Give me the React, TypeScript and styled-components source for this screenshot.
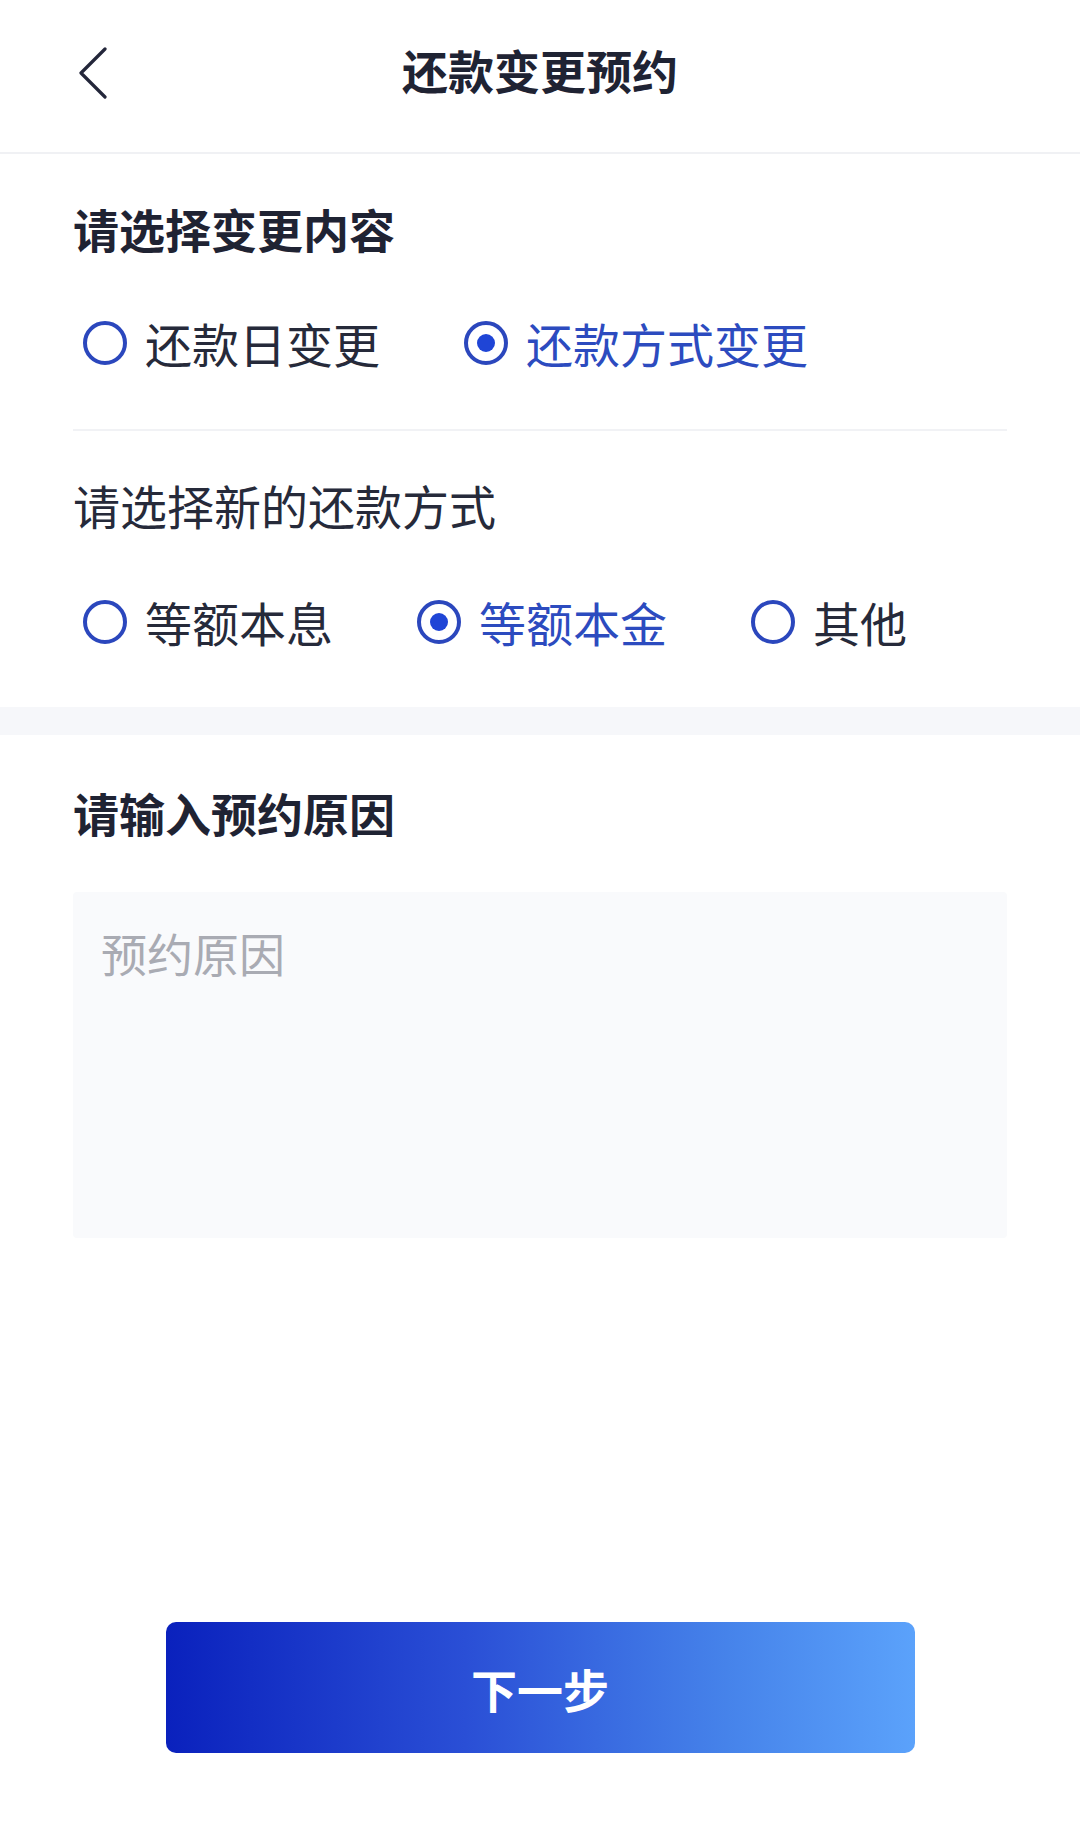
import { useState } from 'react'
import styled, { createGlobalStyle } from 'styled-components'

const GlobalStyle = createGlobalStyle`
  html, body {
    margin: 0;
    padding: 0;
    background: #ffffff;
  }
  body {
    font-family: "Noto Sans CJK SC", "Noto Sans", sans-serif;
    color: #262a3a;
  }
`

type Option = { value: string; label: string }

const changeOptions: Option[] = [
  { value: 'date', label: '还款日变更' },
  { value: 'method', label: '还款方式变更' },
]

const methodOptions: Option[] = [
  { value: 'equal-installment', label: '等额本息' },
  { value: 'equal-principal', label: '等额本金' },
  { value: 'other', label: '其他' },
]

const RadioGroup = ({
  options,
  value,
  onChange,
  top,
}: {
  options: Option[]
  value: string
  onChange: (v: string) => void
  top: number
}) => (
  <RadioRow $top={top}>
    {options.map((o) => (
      <RadioItem key={o.value} onClick={() => onChange(o.value)}>
        <RadioCircle $checked={o.value === value} />
        <RadioLabel $checked={o.value === value}>{o.label}</RadioLabel>
      </RadioItem>
    ))}
  </RadioRow>
)

export default function App() {
  const [change, setChange] = useState('method')
  const [method, setMethod] = useState('equal-principal')

  return (
    <Page>
      <GlobalStyle />
      <Header>
        <BackButton aria-label="返回">
          <svg width="30" height="52" viewBox="0 0 30 52" fill="none">
            <path
              d="M27 2 L3 26 L27 50"
              stroke="#23263a"
              strokeWidth="3.2"
              strokeLinecap="round"
              strokeLinejoin="round"
            />
          </svg>
        </BackButton>
        <HeaderTitle>还款变更预约</HeaderTitle>
      </Header>

      <Section>
        <SectionTitle>请选择变更内容</SectionTitle>
        <RadioGroup options={changeOptions} value={change} onChange={setChange} top={55} />
        <Divider />
        <SubTitle>请选择新的还款方式</SubTitle>
        <RadioGroup options={methodOptions} value={method} onChange={setMethod} top={57} />
      </Section>

      <Band />

      <Section>
        <ReasonTitle>请输入预约原因</ReasonTitle>
        <ReasonInput placeholder="预约原因" />
      </Section>

      <Footer>
        <NextButton>下一步</NextButton>
      </Footer>
    </Page>
  )
}

const Page = styled.div`
  min-height: 100vh;
  display: flex;
  flex-direction: column;
`
const Header = styled.header`
  position: relative;
  box-sizing: border-box;
  height: 154px;
  padding-bottom: 14px;
  display: flex;
  align-items: center;
  justify-content: center;
  border-bottom: 2px solid #f0f1f4;
`
const BackButton = styled.button`
  position: absolute;
  left: 78px;
  top: 47px;
  padding: 0;
  border: none;
  background: none;
  display: flex;
`
const HeaderTitle = styled.h1`
  margin: 0;
  font-size: 46px;
  line-height: 60px;
  font-weight: 700;
  color: #1f2333;
`
const Section = styled.section`
  display: flex;
  flex-direction: column;
  padding: 0 73px;
`
const SectionTitle = styled.h2`
  margin: 44px 0 0;
  font-size: 46px;
  line-height: 60px;
  font-weight: 700;
  color: #1f2333;
`
const ReasonTitle = styled(SectionTitle)`
  margin-top: 47px;
`
const SubTitle = styled.div`
  margin-top: 44px;
  font-size: 47px;
  line-height: 60px;
  color: #262a3a;
`
const RadioRow = styled.div<{ $top: number }>`
  display: flex;
  align-items: center;
  gap: 84px;
  margin-top: ${({ $top }) => $top}px;
  padding-left: 10px;
  height: 60px;
`
const RadioItem = styled.label`
  display: flex;
  align-items: center;
  gap: 18px;
  cursor: pointer;
`
const RadioCircle = styled.span<{ $checked: boolean }>`
  box-sizing: border-box;
  width: 44px;
  height: 44px;
  border-radius: 50%;
  border: 4px solid #2b47bd;
  display: flex;
  align-items: center;
  justify-content: center;

  &::after {
    content: '';
    display: ${({ $checked }) => ($checked ? 'block' : 'none')};
    width: 18px;
    height: 18px;
    border-radius: 50%;
    background: #1f45d6;
  }
`
const RadioLabel = styled.span<{ $checked: boolean }>`
  font-size: 47px;
  line-height: 60px;
  color: ${({ $checked }) => ($checked ? '#2c4bbf' : '#262a3a')};
`
const Divider = styled.div`
  margin-top: 56px;
  height: 2px;
  background: #f1f2f5;
`
const Band = styled.div`
  margin-top: 55px;
  height: 28px;
  background: #f6f7fa;
`
const ReasonInput = styled.textarea`
  box-sizing: border-box;
  margin-top: 50px;
  height: 346px;
  width: 100%;
  resize: none;
  border: none;
  outline: none;
  border-radius: 4px;
  background: #f9fafc;
  padding: 30px 28px;
  font-family: "Noto Sans CJK SC", "Noto Sans", sans-serif;
  font-size: 46px;
  line-height: 60px;
  color: #262a3a;

  &::placeholder {
    color: #a9abb3;
  }
`
const Footer = styled.footer`
  margin-top: auto;
  display: flex;
  justify-content: center;
  padding: 0 0 80px;
`
const NextButton = styled.button`
  width: 749px;
  height: 131px;
  border: none;
  border-radius: 10px;
  background: linear-gradient(90deg, #0a21bd 0%, #2a4fd6 40%, #4683ea 75%, #5ba2fb 100%);
  color: #ffffff;
  font-family: "Noto Sans CJK SC", "Noto Sans", sans-serif;
  font-size: 46px;
  font-weight: 700;
  cursor: pointer;
`
